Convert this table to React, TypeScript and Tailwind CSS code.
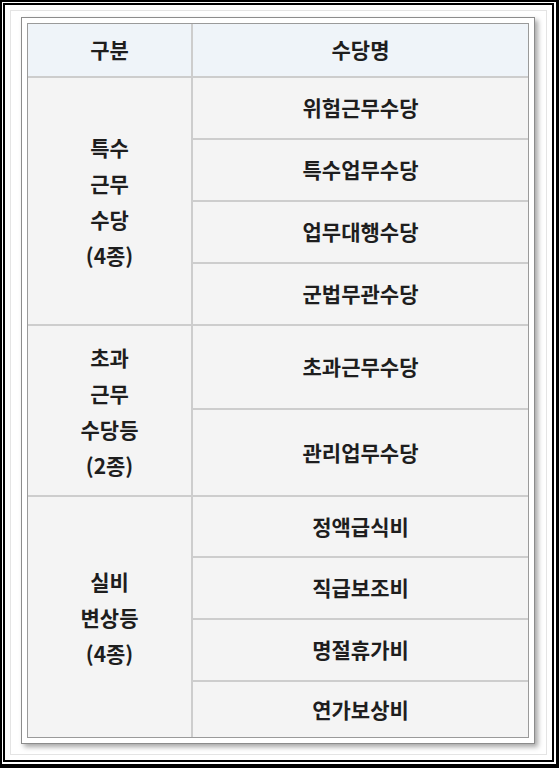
import React from 'react'

interface Group {
  label: string[]
  rows: { name: string; h: string }[]
}

const groups: Group[] = [
  {
    label: ['특수', '근무', '수당', '(4종)'],
    rows: [
      { name: '위험근무수당', h: 'h-[62px]' },
      { name: '특수업무수당', h: 'h-[62px]' },
      { name: '업무대행수당', h: 'h-[62px]' },
      { name: '군법무관수당', h: 'h-[60px]' },
    ],
  },
  {
    label: ['초과', '근무', '수당등', '(2종)'],
    rows: [
      { name: '초과근무수당', h: 'h-[84px]' },
      { name: '관리업무수당', h: 'h-[85px]' },
    ],
  },
  {
    label: ['실비', '변상등', '(4종)'],
    rows: [
      { name: '정액급식비', h: 'h-[61px]' },
      { name: '직급보조비', h: 'h-[62px]' },
      { name: '명절휴가비', h: 'h-[62px]' },
      { name: '연가보상비', h: 'h-[55px]' },
    ],
  },
]

export default function App() {
  return (
    <div
      className="w-[560px] h-[769px] bg-white text-[#1e1e1e]"
      style={{ fontFamily: '"Noto Sans CJK KR", "Noto Sans", sans-serif' }}
    >
      {/* 이중 검은 테두리 액자 */}
      <div className="w-[559px] h-[768px] border-black border-t-2 border-l-2 border-r-[3px] border-b-4 pt-[1px] pl-[1px] pr-[2px] pb-[2px]">
        <div className="h-full border-2 border-black p-[5px]">
          <div className="h-full border border-[#e4e4e4] pl-[10px] pt-[6px]">
            <div className="w-[514px] border border-[#8c8c8c] bg-white p-[5px] shadow-[3px_3px_5px_rgba(0,0,0,0.35)]">
              <div className="border border-[#9a9a9a] bg-[#f4f4f4] text-[21px] font-semibold">
                {/* 헤더 */}
                <div className="flex h-[54px] border-b-2 border-[#cdcdcd] bg-[#eff4f9]">
                  <div className="w-[165px] border-r-2 border-[#cdcdcd] flex items-center justify-center">
                    구분
                  </div>
                  <div className="flex-1 flex items-center justify-center">수당명</div>
                </div>

                {groups.map((g, gi) => (
                  <div
                    key={gi}
                    className={`flex ${gi < groups.length - 1 ? 'border-b-2 border-[#cdcdcd]' : ''}`}
                  >
                    <div className="w-[165px] border-r-2 border-[#cdcdcd] flex flex-col items-center justify-center leading-[36px]">
                      {g.label.map((l) => (
                        <span key={l}>{l}</span>
                      ))}
                    </div>
                    <div className="flex-1 flex flex-col">
                      {g.rows.map((r, ri) => (
                        <div
                          key={r.name}
                          className={`${r.h} flex items-center justify-center ${
                            ri < g.rows.length - 1 ? 'border-b-2 border-[#cdcdcd]' : ''
                          }`}
                        >
                          {r.name}
                        </div>
                      ))}
                    </div>
                  </div>
                ))}
              </div>
            </div>
          </div>
        </div>
      </div>
    </div>
  )
}
